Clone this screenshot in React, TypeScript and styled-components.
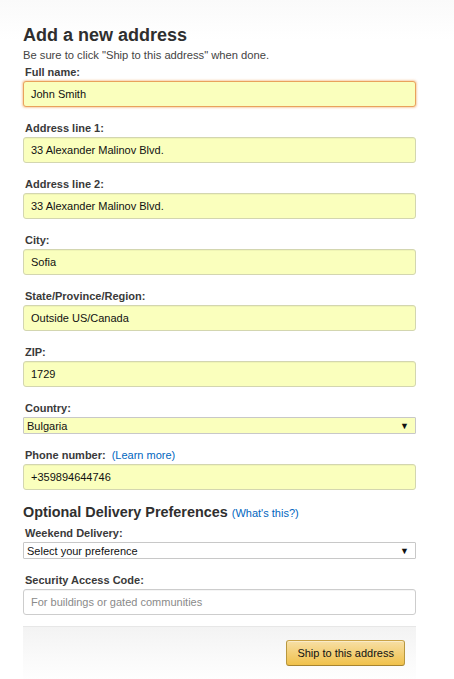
import * as React from "react";
import styled, { createGlobalStyle } from "styled-components";

const colors = {
  text: "#333333",
  input: "#111111",
  link: "#0066c0",
  autofill: "#faffbd",
  border: "#c4c4c4",
  focus: "#e77600",
};

const GlobalStyle = createGlobalStyle`
  html, body {
    margin: 0;
    padding: 0;
    background: #ffffff;
  }
  body {
    font-family: "Liberation Sans", Arial, sans-serif;
    color: ${colors.text};
  }
`;

const Page = styled.div`
  width: 454px;
  height: 679px;
  overflow: hidden;
  padding: 0 38px 0 23px;
  box-sizing: border-box;
  background: linear-gradient(180deg, #fafafa 0, #ffffff 40px);
`;

const Title = styled.h1`
  margin: 0;
  padding-top: 24px;
  font-size: 18px;
  line-height: 22px;
  font-weight: bold;
  color: #2f2f2f;
`;

const Intro = styled.p`
  margin: 3px 0 0;
  font-size: 11.2px;
  line-height: 13px;
  color: #444;
`;

const Field = styled.div`
  display: flex;
  flex-direction: column;
  margin-bottom: 11px;
`;

const Label = styled.label`
  display: flex;
  align-items: center;
  gap: 6px;
  height: 19px;
  padding-left: 2px;
  font-size: 11px;
  font-weight: bold;
  color: #3a3a3a;
`;

const Link = styled.a`
  font-weight: normal;
  color: ${colors.link};
  text-decoration: none;
`;

const TextInput = styled.div<{ filled?: boolean; focused?: boolean }>`
  display: flex;
  align-items: center;
  height: 26px;
  box-sizing: border-box;
  padding: 0 7px;
  border: 1px solid ${(p) => (p.focused ? "#e9a25c" : p.filled ? "#d3d6b0" : "#cdcdcd")};
  border-radius: 3px;
  background: ${(p) => (p.filled ? colors.autofill : "#ffffff")};
  box-shadow: ${(p) =>
    p.focused ? "0 0 2px 1px rgba(228, 121, 17, 0.35)" : "0 1px 0 rgba(255,255,255,0.5), inset 0 1px 0 rgba(0,0,0,0.04)"};
  font-size: 11px;
  color: ${(p) => (p.filled ? colors.input : "#8a8a8a")};
`;

const Select = styled.div<{ filled?: boolean }>`
  display: flex;
  align-items: center;
  justify-content: space-between;
  height: 17px;
  box-sizing: border-box;
  padding: 0 6px 0 3px;
  border: 1px solid #c8c8c8;
  border-radius: 1px;
  background: ${(p) => (p.filled ? colors.autofill : "#ffffff")};
  font-size: 11px;
  color: ${colors.input};
`;

const Arrow = styled.span`
  font-size: 9px;
  color: #111;
`;

const SectionTitle = styled.h2`
  display: flex;
  align-items: baseline;
  gap: 4px;
  margin: 0;
  padding-top: 3px;
  height: 19px;
  font-size: 14.4px;
  font-weight: bold;
  color: #2f2f2f;
`;

const SmallLink = styled(Link)`
  font-size: 11px;
`;

const Footer = styled.div`
  display: flex;
  justify-content: flex-end;
  margin-top: 1px;
  padding: 13px 11px 20px;
  border-top: 1px solid #e7e7e7;
  background: linear-gradient(180deg, #f3f3f3 0, #fbfbfb 60%, #ffffff 100%);
`;

const ShipButton = styled.button`
  height: 26px;
  padding: 0 10px;
  border: 1px solid;
  border-color: #c9a347 #b8973e #a6832f;
  border-radius: 3px;
  background: linear-gradient(180deg, #f7dfa5, #f0c14b);
  box-shadow: inset 0 1px 0 rgba(255, 255, 255, 0.4);
  font-family: "Liberation Sans", Arial, sans-serif;
  font-size: 11px;
  color: #111;
  cursor: pointer;
`;

const fields = [
  { label: "Full name:", value: "John Smith", focused: true },
  { label: "Address line 1:", value: "33 Alexander Malinov Blvd." },
  { label: "Address line 2:", value: "33 Alexander Malinov Blvd." },
  { label: "City:", value: "Sofia" },
  { label: "State/Province/Region:", value: "Outside US/Canada" },
  { label: "ZIP:", value: "1729" },
];

const App = () => (
  <>
    <GlobalStyle />
    <Page>
      <Title>Add a new address</Title>
      <Intro>Be sure to click "Ship to this address" when done.</Intro>
      {fields.map((f) => (
        <Field key={f.label}>
          <Label>{f.label}</Label>
          <TextInput filled focused={f.focused}>
            {f.value}
          </TextInput>
        </Field>
      ))}
      <Field>
        <Label>Country:</Label>
        <Select filled>
          Bulgaria
          <Arrow>▼</Arrow>
        </Select>
      </Field>
      <Field>
        <Label>
          Phone number: <Link href="#">(Learn more)</Link>
        </Label>
        <TextInput filled>+359894644746</TextInput>
      </Field>
      <SectionTitle>
        Optional Delivery Preferences <SmallLink href="#">(What's this?)</SmallLink>
      </SectionTitle>
      <Field>
        <Label>Weekend Delivery:</Label>
        <Select>
          Select your preference
          <Arrow>▼</Arrow>
        </Select>
      </Field>
      <Field>
        <Label>Security Access Code:</Label>
        <TextInput>For buildings or gated communities</TextInput>
      </Field>
      <Footer>
        <ShipButton>Ship to this address</ShipButton>
      </Footer>
    </Page>
  </>
);

export default App;
